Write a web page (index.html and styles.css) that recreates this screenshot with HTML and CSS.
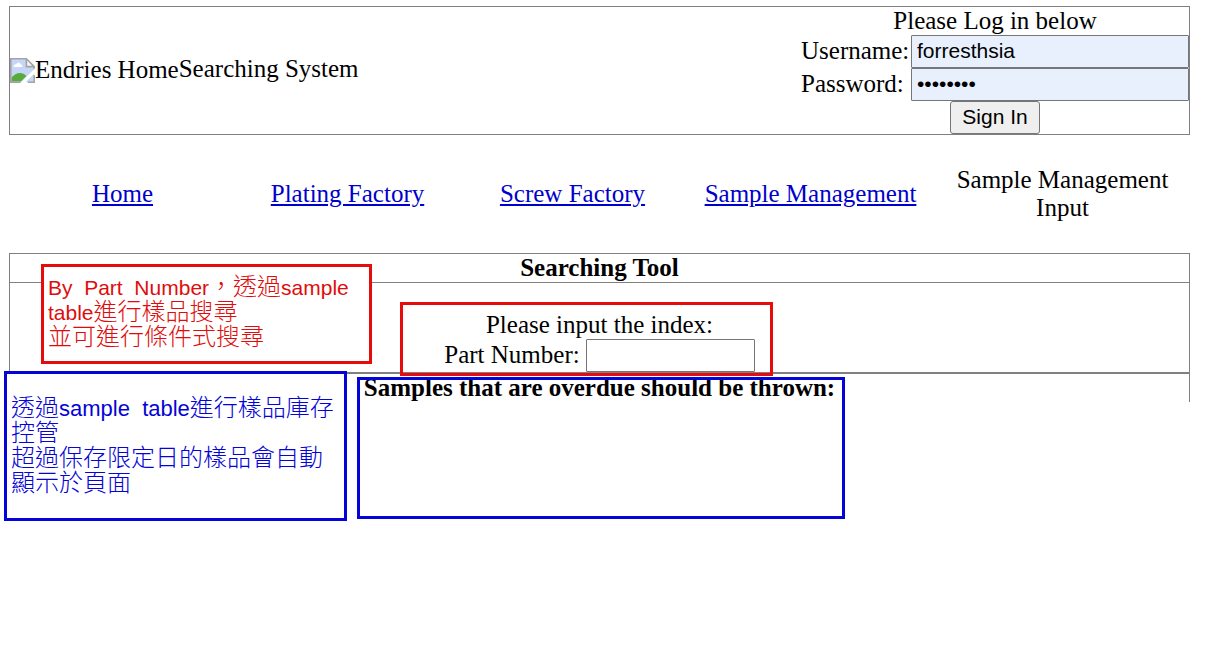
FILE: index.html
```html
<!DOCTYPE html>
<html lang="zh-Hant">
<head>
<meta charset="utf-8">
<title>Searching System</title>
<link rel="stylesheet" href="styles.css">
</head>
<body>
<div class="page">
  <header class="banner">
    <div class="brand">
      <span class="logo"><svg class="logo-icon" viewBox="0 0 16 16" aria-hidden="true">
        <path d="M.5.5h10l5 5v10H.5z" fill="#c6d6f8"/>
        <path d="M2.3 5.3c0-1 1-1.5 1.6-1.2C4.4 2.5 6.700 2.700 6.800 4.200 7.800 4.100 8 5.300 7.700 5.700H2.500z" fill="#fff"/>
        <path d="M1 15v-2.500C3.500 9 8 8.500 10.500 11.500L7 15z" fill="#58ab3a"/>
        <path d="M10.500.5v5h5z" fill="#f6f6f6"/>
        <path d="M15.500 8V5.500l-5-5H.5v15H7M10.500.5v5h5M11.500 15.500h4V11" fill="none" stroke="#a3a3a3"/>
        <path d="M16 6.500v3L9.500 16h-3z" fill="#fff"/>
      </svg>Endries Home</span><span>Searching System</span>
    </div>
    <form class="login">
      <p class="login-title">Please Log in below</p>
      <label for="user">Username:</label>
      <input class="field filled" id="user" type="text" value="forresthsia">
      <label for="pass">Password:</label>
      <input class="field filled" id="pass" type="password" value="password">
      <button class="sign-in" type="button">Sign In</button>
    </form>
  </header>

  <nav class="menu">
    <a href="#home">Home</a>
    <a href="#plating">Plating Factory</a>
    <a href="#screw">Screw Factory</a>
    <a href="#samples">Sample Management</a>
    <span>Sample Management Input</span>
  </nav>

  <main class="tool">
    <h1 class="heading">Searching Tool</h1>
    <form class="search">
      <p>Please input the index:</p>
      <div class="search-row">
        <label for="part">Part Number:</label>
        <input class="field part" id="part" type="text">
      </div>
    </form>
    <h2 class="heading">Samples that are overdue should be thrown:</h2>
  </main>

  <div class="note red search-note">By&nbsp; Part&nbsp; Number<span class="cjk">，透過</span>sample table<span class="cjk">進行樣品搜尋<br>並可進行條件式搜尋</span></div>
  <div class="note red search-frame"></div>
  <div class="note blue stock-note"><span class="cjk">透過</span>sample&nbsp; table<span class="cjk">進行樣品庫存控管<br>超過保存限定日的樣品會自動顯示於頁面</span></div>
  <div class="note blue stock-frame"></div>
</div>
</body>
</html>
```
FILE: styles.css
```css
* { box-sizing: border-box; }
body {
  margin: 0;
  padding: 6px 17px 0 9px;
  background: #fff;
  color: #000;
  font: 25px/28px "Liberation Serif", "Times New Roman", serif;
}
p, h1, h2 { margin: 0; font-size: 25px; }

.banner {
  display: flex;
  justify-content: space-between;
  align-items: center;
  border: 1px solid #808080;
}
.brand { display: flex; align-items: center; padding-bottom: 4px; }
.logo { display: flex; align-items: center; padding-top: 3px; }
.logo-icon { width: 25px; height: 25px; }

.login {
  display: grid;
  grid-template-columns: 110px 278px;
  align-items: center;
}
.login label { padding-bottom: 2px; }
.login-title { grid-column: 1 / -1; text-align: center; }
.field {
  width: 100%;
  height: 33px;
  padding: 1px 5px 3px;
  border: 1px solid #767676;
  border-radius: 1px;
  background: #fff;
  color: #000;
  font: 21px "Liberation Sans", Arial, sans-serif;
}
.filled { background: #e8f0fe; }
.sign-in {
  grid-column: 1 / -1;
  justify-self: center;
  height: 33px;
  padding: 0 11px 2px;
  border: 1px solid #767676;
  border-radius: 3px;
  background: #efefef;
  color: #000;
  font: 21px "Liberation Sans", Arial, sans-serif;
}

.menu {
  display: grid;
  grid-template-columns: 227fr 223fr 227fr 249fr 255fr;
  place-items: center;
  padding: 31px 0;
  text-align: center;
}
.menu a { color: #0000cc; }
.menu span { padding: 0 16px; }

.tool { border: 1px solid #808080; border-bottom: 0; }
.heading { font-weight: bold; text-align: center; }
.search {
  padding-top: 28px;
  border-top: 1px solid #808080;
  border-bottom: 2px solid #808080;
  text-align: center;
}
.search-row {
  display: flex;
  justify-content: center;
  align-items: center;
  gap: 6px;
}
.search-row label { padding-bottom: 2px; }
.part { width: 169px; }

.note {
  position: absolute;
  border: 3px solid;
  font: 22px/25px "Liberation Sans", "Noto Sans CJK TC", sans-serif;
}
.cjk { font-size: 24px; font-weight: 300; line-height: 20px; }
.red { border-color: #e60c0c; color: #e00c0c; }
.blue { border-color: #0404d8; color: #0404d8; }
.search-note {
  left: 41px; top: 264px; width: 331px; height: 100px;
  padding: 8px 4px;
  background: #fff;
  font-size: 21px;
}
.search-frame { left: 400px; top: 302px; width: 373px; height: 74px; }
.stock-note {
  left: 4px; top: 371px; width: 343px; height: 150px;
  padding: 22px 4px;
  background: #fff;
}
.stock-frame { left: 357px; top: 377px; width: 488px; height: 142px; }
```
